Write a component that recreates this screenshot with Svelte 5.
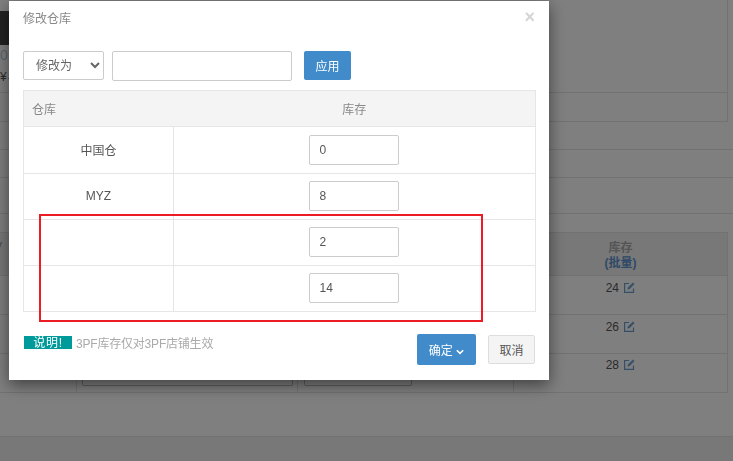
<script>
  const stock = [
    { name: '中国仓', qty: 0 },
    { name: 'MYZ', qty: 8 },
    { name: '', qty: 2 },
    { name: '', qty: 14 }
  ];
  const behind = [24, 26, 28];
</script>

<div class="page">
  <section class="panel">
    <div class="thumb"></div>
    <div class="num">0</div>
    <div class="price">¥<span class="caret"></span></div>
  </section>
  <div class="band one"></div>
  <div class="band two"></div>
  <div class="band three"></div>

  <div class="list">
    <div class="list-row head">
      <div class="c0">y</div>
      <div class="c1"></div>
      <div class="c2"></div>
      <div class="c3"><b>库存</b><b class="link">(批量)</b></div>
    </div>
    {#each behind as n, i}
      <div class="list-row" class:last={i === 2}>
        <div class="c0"></div>
        <div class="c1">{#if i === 2}<span class="box"></span>{/if}</div>
        <div class="c2">{#if i === 2}<span class="box short"></span>{/if}</div>
        <div class="c3 count">
          {n}
          <svg width="11" height="11" viewBox="0 0 11 11" fill="none" stroke="#6d9fd0" stroke-width="1.2">
            <path d="M9.5 6.5v3.9H.6V1.5h4.4" />
            <path d="M3.8 7.2l.3-1.7L9 .8l1.3 1.3-4.8 4.8z" fill="#6d9fd0" stroke-width=".5" />
          </svg>
        </div>
      </div>
    {/each}
  </div>
  <div class="foot"></div>
</div>

<div class="backdrop"></div>

<div class="modal">
  <header>
    <h4>修改仓库</h4>
    <span class="close">×</span>
  </header>

  <div class="batch">
    <select>
      <option>修改为</option>
    </select>
    <input class="batch-input" type="text" />
    <button class="primary apply">应用</button>
  </div>

  <table>
    <thead>
      <tr>
        <th class="name">仓库</th>
        <th>库存</th>
      </tr>
    </thead>
    <tbody>
      {#each stock as row}
        <tr>
          <td class="wh">{row.name}</td>
          <td class="qty"><input type="text" value={row.qty} /></td>
        </tr>
      {/each}
    </tbody>
  </table>

  <footer>
    <div class="note">
      <span class="label">说明!</span>
      <span class="hint">3PF库存仅对3PF店铺生效</span>
    </div>
    <button class="primary ok">
      确定
      <svg width="8" height="6" viewBox="0 0 8 6" fill="none" stroke="#fff" stroke-width="1.6">
        <path d="M.8 1.2L4 4.4l3.2-3.2" />
      </svg>
    </button>
    <button class="cancel">取消</button>
  </footer>

  <div class="marker"></div>
</div>

<style>
  :global(body) {
    margin: 0;
    overflow: hidden;
    font-family: "Liberation Sans", "Noto Sans CJK SC", sans-serif;
    font-size: 12px;
    color: #555;
  }

  .page {
    height: 461px;
    overflow: hidden;
    background: #fff;
    display: flex;
    flex-direction: column;
  }

  .panel {
    height: 121px;
    margin-right: 5px;
    border-bottom: 1px solid #e4e4e4;
    border-right: 1px solid #e4e4e4;
    flex: none;
  }

  .thumb {
    width: 30px;
    height: 34px;
    background: #444;
    margin-top: 11px;
  }

  .num {
    font-size: 14px;
    line-height: 18px;
    color: #bcd;
    margin-top: 1px;
  }

  .price {
    line-height: 14px;
    margin-top: 6px;
    padding-bottom: 8px;
    border-bottom: 1px solid #e4e4e4;
  }

  .caret {
    display: inline-block;
    border: 3px solid transparent;
    border-top-color: #555;
    border-bottom: 0;
    margin-left: 1px;
  }

  .band {
    flex: none;
    border-bottom: 1px solid #e4e4e4;
  }
  .one { height: 27px; }
  .two { height: 27px; }
  .three { height: 35px; }

  .list {
    flex: none;
    margin: 18px 5px 0 0;
    border-top: 1px solid #e4e4e4;
    border-right: 1px solid #e4e4e4;
  }

  .list-row {
    display: grid;
    grid-template-columns: 77px 221px 216px 1fr;
    height: 38px;
    border-bottom: 1px solid #e4e4e4;
    background: #fff;
  }

  .list-row.head {
    height: 42px;
    background: #f0f0f0;
  }

  .list-row > div {
    border-right: 1px solid #e4e4e4;
  }
  .list-row > .c3 { border-right: 0; }

  .head .c0 {
    font-size: 14px;
    line-height: 24px;
    border-right: 0;
    margin-left: -5px;
    color: #999;
  }

  .head .c3 {
    display: flex;
    flex-direction: column;
    align-items: center;
    padding: 8px 0 0;
    line-height: 15px;
    color: #aaa;
  }

  .link { color: #5f93d0; }

  .count {
    text-align: center;
    color: #555;
    padding-top: 4px;
    line-height: 16px;
  }
  .last .count { padding-top: 3px; }
  .count svg { vertical-align: -1px; margin-left: 2px; }

  .box {
    display: block;
    height: 32px;
    margin: 0 4px 0 5px;
    border: 1px solid #bbb;
    border-top: 0;
    border-radius: 0 0 2px 2px;
    box-sizing: border-box;
  }

  .box.short {
    width: 108px;
    margin-left: 6px;
  }

  .foot {
    flex: 1;
    margin-top: 43px;
    border-top: 1px solid #e4e4e4;
    background: #f0f0f0;
  }

  .backdrop {
    position: fixed;
    inset: 0;
    background: rgba(0, 0, 0, 0.5);
  }

  .modal {
    position: fixed;
    left: 9px;
    top: 1px;
    width: 540px;
    height: 379px;
    box-sizing: border-box;
    padding: 0 13px 0 14px;
    background: #fff;
    box-shadow: 0 5px 15px rgba(0, 0, 0, 0.5);
  }

  header {
    display: flex;
    justify-content: space-between;
    height: 50px;
  }

  h4 {
    margin: 10px 0 0;
    font-size: 12px;
    font-weight: 400;
    line-height: 16px;
    color: #888;
  }

  .close {
    font-size: 18px;
    font-weight: 700;
    line-height: 18px;
    margin: 7px 1px 0 0;
    color: #d4d4d4;
  }

  .batch {
    display: flex;
    align-items: flex-start;
    height: 39px;
  }

  select {
    width: 81px;
    height: 29px;
    margin-right: 8px;
    padding: 0 0 0 8px;
    border: 1px solid #ccc;
    border-radius: 2px;
    background: #fff;
    color: #666;
    font: inherit;
  }

  input {
    box-sizing: border-box;
    border: 1px solid #ccc;
    border-radius: 2px;
    color: #555;
    font: inherit;
    outline: none;
  }

  .batch-input {
    width: 180px;
    height: 30px;
    margin-right: 12px;
  }

  button {
    box-sizing: border-box;
    border-radius: 2px;
    font: inherit;
    padding: 0;
  }

  .primary {
    border: 0;
    background: #428bca;
    color: #fff;
  }

  .apply {
    width: 47px;
    height: 29px;
  }

  table {
    width: 513px;
    border-collapse: collapse;
    table-layout: fixed;
  }

  th, td {
    border: 1px solid #e6e6e6;
    padding: 0;
    font-weight: 400;
    color: #888;
  }

  thead tr { height: 36px; }
  thead th { background: #f4f4f4; border-left: 0; border-right: 0; }
  thead th:first-child { border-left: 1px solid #e6e6e6; }
  thead th:last-child { border-right: 1px solid #e6e6e6; }

  th.name {
    width: 150px;
    text-align: left;
    padding-left: 8px;
    box-sizing: border-box;
  }

  tbody tr { height: 46px; }
  tbody tr:first-child { height: 47px; }

  .wh {
    text-align: center;
    color: #555;
    padding-bottom: 2px;
  }

  .qty { padding-right: 2px; }
  tbody tr:not(:first-child) .qty { padding-bottom: 1px; }

  .qty input {
    display: block;
    width: 90px;
    height: 30px;
    margin: 0 auto;
    padding: 0 10px;
  }

  footer {
    display: flex;
    align-items: flex-start;
    padding-top: 22px;
    margin-right: 1px;
  }

  .note {
    flex: 1;
    display: flex;
    align-items: center;
    padding: 2px 0 0 1px;
    height: 13px;
  }

  .label {
    width: 48px;
    height: 13px;
    line-height: 15px;
    text-align: center;
    letter-spacing: .8px;
    background: #009a9a;
    color: #fff;
  }

  .hint {
    margin-left: 4px;
    letter-spacing: -.2px;
    color: #aaa;
  }

  .ok {
    width: 59px;
    height: 31px;
    margin-right: 12px;
  }

  .cancel {
    width: 47px;
    height: 29px;
    margin-top: 1px;
    border: 1px solid #ddd;
    background: #f4f4f4;
    color: #555;
  }

  .marker {
    position: absolute;
    left: 30px;
    top: 213px;
    width: 444px;
    height: 108px;
    box-sizing: border-box;
    border: 2px solid #ed1c24;
  }
</style>
